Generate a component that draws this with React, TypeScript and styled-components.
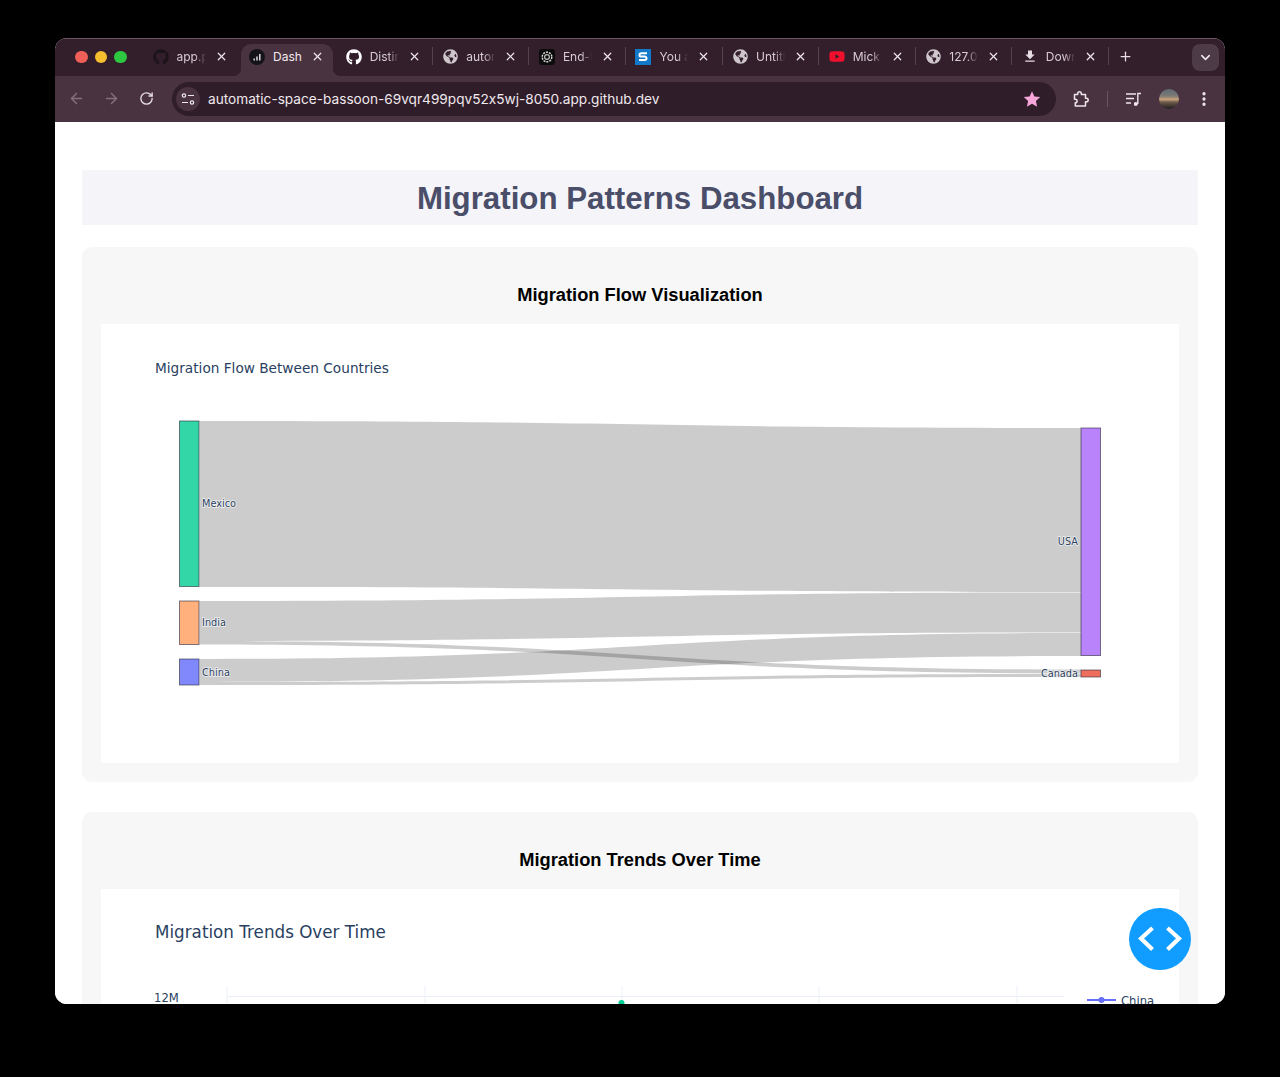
import React from 'react';
import styled, { createGlobalStyle } from 'styled-components';
import { ArrowLeft, ArrowRight, RotateCw, X, Plus, ChevronDown, EllipsisVertical } from 'lucide-react';
import { FaGithub, FaGlobeAmericas, FaYoutube } from 'react-icons/fa';
import { MdFileDownload } from 'react-icons/md';

const Global = createGlobalStyle`
  html, body { margin: 0; padding: 0; background: #000; height: 1077px; overflow: hidden; }
  * { box-sizing: border-box; }
`;

const STRIP = '#331f2c';
const BAR = '#4a3340';
const FIELD = '#2f1d29';

const BrowserWindow = styled.div`
  position: relative;
  width: 1170px;
  height: 966px;
  margin: 38px 0 0 55px;
  border-radius: 12px;
  overflow: hidden;
  display: flex;
  flex-direction: column;
  background: #fff;
`;
const TabStrip = styled.div`
  height: 38px;
  flex: none;
  display: flex;
  align-items: stretch;
  padding-top: 5px;
  background: ${STRIP};
  border-top: 1px solid #6b5560;
`;
const Lights = styled.div`
  width: 88px;
  flex: none;
  display: flex;
  align-items: flex-start;
  gap: 7px;
  padding: 6.5px 0 0 20px;
`;
const Light = styled.span<{ $c: string }>`
  width: 12.5px;
  height: 12.5px;
  border-radius: 50%;
  background: ${p => p.$c};
`;
const Tab = styled.div<{ $active?: boolean }>`
  position: relative;
  isolation: isolate;
  width: 95.6px;
  flex: none;
  display: flex;
  align-items: center;
  padding: 0 9px 7px 9.5px;
  color: #d8ccd3;
  font: 12px "Inter", "Liberation Sans", sans-serif;
  ${p => p.$active && `
    color: #f1eaee;
    &::before {
      content: '';
      position: absolute;
      inset: 0 2px 0 1.5px;
      background: ${BAR};
      border-radius: 10px 10px 0 0;
      z-index: -1;
    }
    &::after {
      content: '';
      position: absolute;
      left: -6.5px;
      right: -6px;
      bottom: 0;
      height: 8px;
      z-index: -1;
      background:
        radial-gradient(circle at 0 0, transparent 8px, ${BAR} 8.5px) left top / 8px 8px no-repeat,
        radial-gradient(circle at 100% 0, transparent 8px, ${BAR} 8.5px) right top / 8px 8px no-repeat;
    }
  `}
`;
const Favicon = styled.span`
  width: 16px;
  height: 16px;
  flex: none;
  display: flex;
  align-items: center;
  justify-content: center;
`;
const TabTitle = styled.span<{ $fade?: boolean }>`
  width: 29px;
  margin-left: 8px;
  flex: none;
  overflow: hidden;
  white-space: nowrap;
  ${p => p.$fade && `
    -webkit-mask-image: linear-gradient(90deg, #000 62%, transparent 100%);
    mask-image: linear-gradient(90deg, #000 62%, transparent 100%);
  `}
`;
const TabClose = styled.span`
  margin-left: 8.5px;
  width: 14px;
  height: 14px;
  flex: none;
  display: flex;
  align-items: center;
  justify-content: center;
  color: #eee6ea;
`;
const Divider = styled.span<{ $off?: boolean }>`
  width: 1px;
  height: 18px;
  margin-top: 3px;
  flex: none;
  background: ${p => (p.$off ? 'transparent' : '#56414d')};
`;
const NewTab = styled.span`
  width: 33px;
  flex: none;
  display: flex;
  align-items: center;
  justify-content: center;
  padding-bottom: 7px;
  color: #e6dde2;
`;
const TabMenu = styled.span`
  margin-left: auto;
  margin-right: 6px;
  width: 27px;
  height: 27px;
  border-radius: 8px;
  background: #4d3b47;
  color: #efe8ec;
  display: flex;
  align-items: center;
  justify-content: center;
`;
const Toolbar = styled.div`
  height: 46px;
  flex: none;
  display: flex;
  align-items: center;
  background: ${BAR};
  padding: 0 0 1px 12px;
`;
const NavButton = styled.span<{ $dim?: boolean }>`
  width: 18px;
  height: 18px;
  margin-right: 17px;
  display: flex;
  align-items: center;
  justify-content: center;
  color: ${p => (p.$dim ? '#84707c' : '#e6dde2')};
`;
const Omnibox = styled.div`
  width: 884px;
  height: 34px;
  border-radius: 17px;
  background: ${FIELD};
  display: flex;
  align-items: center;
  padding: 0 15px 0 4px;
  color: #f0e9ed;
  font: 13.65px "Inter", "Liberation Sans", sans-serif;
  font-feature-settings: "calt" 0;
`;
const SiteChip = styled.span`
  width: 24px;
  height: 24px;
  margin-right: 8px;
  border-radius: 50%;
  background: ${BAR};
  display: flex;
  align-items: center;
  justify-content: center;
`;
const Url = styled.span`
  flex: 1;
  white-space: nowrap;
`;
const Tools = styled.div`
  display: flex;
  align-items: center;
  margin-left: 15px;
  color: #eee6ea;
`;
const ToolIcon = styled.span`
  width: 20px;
  height: 20px;
  display: flex;
  align-items: center;
  justify-content: center;
`;
const ToolSep = styled.span`
  width: 1px;
  height: 16px;
  margin: 0 16px;
  background: #6a5460;
`;
const Avatar = styled.span`
  width: 20px;
  height: 20px;
  margin: 0 15px 0 15px;
  border-radius: 50%;
  background: linear-gradient(180deg, #5d6a72 0%, #7c7a75 35%, #c9a27a 52%, #6b5a4a 66%, #1f1c1c 100%);
`;
const Content = styled.main`
  flex: 1;
  min-height: 0;
  overflow: hidden;
  padding: 48px 27px 0;
  background: #fff;
`;
const Header = styled.h1`
  margin: 0 0 22px;
  height: 55px;
  background: #f4f4f9;
  color: #4a4e69;
  font: bold 31.25px/57px "Liberation Sans", Arial, sans-serif;
  text-align: center;
`;
const Card = styled.section`
  background: #f7f7f7;
  border-radius: 10px;
  padding: 0 19px 19px;
  margin-bottom: 30px;
`;
const CardTitle = styled.h2`
  margin: 0;
  height: 77px;
  padding-top: 35px;
  color: #000;
  font: bold 18.3px/25px "Liberation Sans", Arial, sans-serif;
  text-align: center;
`;
const Plot = styled.div<{ $h: number }>`
  height: ${p => p.$h}px;
  background: #fff;
  overflow: hidden;
`;
const ChartSvg = styled.svg`
  display: block;
  width: 1078px;
`;
const PlotTitle = styled.text<{ $size: number }>`
  font-family: "DejaVu Sans", Verdana, sans-serif;
  font-size: ${p => p.$size}px;
  fill: #2a3f5f;
`;
const NodeLabel = styled.text`
  font-family: "DejaVu Sans", Verdana, sans-serif;
  font-size: 9.75px;
  fill: #2a3f5f;
  paint-order: stroke;
  stroke: rgba(255, 255, 255, 0.75);
  stroke-width: 1.5px;
`;
const AxisLabel = styled.text`
  font-family: "DejaVu Sans", Verdana, sans-serif;
  font-size: 11.6px;
  fill: #2a3f5f;
`;
const Fab = styled.button`
  position: absolute;
  left: 1074px;
  top: 870px;
  width: 62px;
  height: 62px;
  padding: 0;
  border: 0;
  border-radius: 50%;
  background: #119dff;
  display: flex;
  align-items: center;
  justify-content: center;
`;

const link = (x0: number, x1: number, a0: number, b0: number, a1: number, b1: number) => {
  const m = (x0 + x1) / 2;
  return `M${x0} ${a0}C${m} ${a0} ${m} ${a1} ${x1} ${a1}L${x1} ${b1}C${m} ${b1} ${m} ${b0} ${x0} ${b0}Z`;
};

const links = [
  [421, 587, 428, 592],
  [601, 641, 592.5, 632.5],
  [641, 644.5, 669.5, 673.5],
  [659, 682, 633, 656],
  [682, 685, 674, 677],
];
const nodes = [
  { x: 179.5, y: 421, h: 165.5, c: '#33d6a6' },
  { x: 179.5, y: 601, h: 43.5, c: '#ffb07c' },
  { x: 179.5, y: 659, h: 26, c: '#8088fb' },
  { x: 1081, y: 428, h: 227.5, c: '#b983fc' },
  { x: 1081, y: 670, h: 7, c: '#ef6f5e' },
];

const Sankey = () => (
  <ChartSvg viewBox="101 324 1078 439" height={439}>
    <PlotTitle $size={13.67} x={155} y={372.5}>Migration Flow Between Countries</PlotTitle>
    {links.map((l, i) => (
      <path key={i} d={link(199.5, 1081, l[0], l[1], l[2], l[3])} fill="rgba(0,0,0,0.2)" />
    ))}
    {nodes.map((n, i) => (
      <rect key={i} x={n.x} y={n.y} width={19.5} height={n.h} fill={n.c} stroke="rgba(40,40,60,0.6)" strokeWidth={1} />
    ))}
    <NodeLabel x={202} y={507}>Mexico</NodeLabel>
    <NodeLabel x={202} y={626}>India</NodeLabel>
    <NodeLabel x={202} y={676}>China</NodeLabel>
    <NodeLabel x={1078} y={545} textAnchor="end">USA</NodeLabel>
    <NodeLabel x={1078} y={677} textAnchor="end">Canada</NodeLabel>
  </ChartSvg>
);

const Trends = () => (
  <ChartSvg viewBox="101 889 1078 115" height={115}>
    <PlotTitle $size={16.75} x={155} y={937.5}>Migration Trends Over Time</PlotTitle>
    {[227, 425, 622, 819, 1017].map(x => (
      <line key={x} x1={x} x2={x} y1={986} y2={1004} stroke="#ebf0f8" />
    ))}
    <line x1={227} x2={1064} y1={996.5} y2={996.5} stroke="#ebf0f8" />
    <AxisLabel x={154} y={1001.5}>12M</AxisLabel>
    <circle cx={621.5} cy={1003} r={3} fill="#00cc96" />
    <line x1={1087} x2={1116} y1={1000} y2={1000} stroke="#636efa" strokeWidth={2} />
    <circle cx={1101.5} cy={1000} r={3} fill="#636efa" />
    <AxisLabel x={1121} y={1005}>China</AxisLabel>
  </ChartSvg>
);

const DashIcon = () => (
  <svg width="16" height="16" viewBox="0 0 16 16">
    <circle cx="8" cy="8" r="8" fill="#15131a" />
    <path d="M4.5 9.5h1.4v2H4.5zM7.3 7.5h1.4v4H7.3zM10.1 5h1.4v6.5h-1.4z" fill="#e8e8e8" />
  </svg>
);
const GptIcon = () => (
  <svg width="16" height="16" viewBox="0 0 16 16">
    <rect width="16" height="16" rx="3" fill="#0c0c0c" />
    <circle cx="8" cy="8" r="4.8" fill="none" stroke="#d8d8d8" strokeWidth="1.4" strokeDasharray="2 1" />
    <circle cx="8" cy="8" r="2.4" fill="none" stroke="#bdbdbd" strokeWidth="1.2" />
  </svg>
);
const StackIcon = () => (
  <svg width="16" height="16" viewBox="0 0 16 16">
    <rect width="16" height="16" fill="#1478c8" />
    <path d="M12 4.2H6.2a1.5 1.5 0 0 0 0 3.4h3.6a1.5 1.5 0 0 1 0 3.4H4" fill="none" stroke="#fff" strokeWidth="2" />
  </svg>
);
const SiteIcon = () => (
  <svg width="14" height="14" viewBox="0 0 14 14" fill="none" stroke="#efe8ec" strokeWidth="1.2">
    <circle cx="3" cy="3.5" r="1.7" />
    <path d="M7 3.5h6M1 10.5h6" />
    <circle cx="11" cy="10.5" r="1.7" />
  </svg>
);
const ExtensionIcon = () => (
  <svg width="18" height="18" viewBox="0 0 18 18" fill="none" stroke="currentColor" strokeWidth="1.5" strokeLinejoin="round">
    <path d="M2.5 4.5h3.2V3.6a1.8 1.8 0 0 1 3.6 0v.9h4.2v3.7h.9a1.8 1.8 0 0 1 0 3.6h-.9v4.2H3.3v-3.2c1 0 1.8-.8 1.8-1.8s-.8-1.8-1.8-1.8h-.8z" />
  </svg>
);
const StarIcon = () => (
  <svg width="18" height="18" viewBox="0 0 18 18">
    <path d="M9 1.2l2.4 5.3 5.8.6-4.3 3.9 1.2 5.7L9 13.8l-5.1 2.9 1.2-5.7L.8 7.1l5.8-.6z" fill="#f7a6da" />
  </svg>
);
const MediaIcon = () => (
  <svg width="16" height="16" viewBox="0 0 16 16" fill="none" stroke="currentColor" strokeWidth="1.4">
    <path d="M0 3h10M0 7.5h8M0 12h5M11.8 13V2.5H15" />
    <circle cx="9.8" cy="13" r="2" fill="currentColor" stroke="none" />
  </svg>
);

type TabDef = { icon: React.ReactNode; title: string; active?: boolean; fade?: boolean; noDivider?: boolean };
const globe = <FaGlobeAmericas size={15} color="#cfc6cb" />;
const tabs: TabDef[] = [
  { icon: <FaGithub size={16} color="#1d1419" />, title: 'app.py', fade: true, noDivider: true },
  { icon: <DashIcon />, title: 'Dash', active: true, noDivider: true },
  { icon: <FaGithub size={16} color="#fff" />, title: 'Distinct', fade: true },
  { icon: globe, title: 'automatic', fade: true },
  { icon: <GptIcon />, title: 'End-to', fade: true },
  { icon: <StackIcon />, title: 'You are', fade: true },
  { icon: globe, title: 'Untitled', fade: true },
  { icon: <FaYoutube size={17} color="#f0102e" />, title: 'Mick', fade: true },
  { icon: globe, title: '127.0.0.1', fade: true },
  { icon: <MdFileDownload size={17} color="#e6dde2" />, title: 'Downloads', fade: true },
];

export default function App() {
  return (
    <>
      <Global />
      <BrowserWindow>
        <TabStrip>
          <Lights>
            <Light $c="#ee5f57" />
            <Light $c="#f6bd2f" />
            <Light $c="#2dc840" />
          </Lights>
          {tabs.map(t => (
            <React.Fragment key={t.title}>
              <Tab $active={t.active}>
                <Favicon>{t.icon}</Favicon>
                <TabTitle $fade={t.fade}>{t.title}</TabTitle>
                <TabClose><X size={13} strokeWidth={2.2} /></TabClose>
              </Tab>
              <Divider $off={t.noDivider} />
            </React.Fragment>
          ))}
          <NewTab><Plus size={15} strokeWidth={2} /></NewTab>
          <TabMenu><ChevronDown size={15} strokeWidth={2.5} /></TabMenu>
        </TabStrip>
        <Toolbar>
          <NavButton $dim><ArrowLeft size={17} /></NavButton>
          <NavButton $dim><ArrowRight size={17} /></NavButton>
          <NavButton><RotateCw size={15} strokeWidth={2.2} /></NavButton>
          <Omnibox>
            <SiteChip><SiteIcon /></SiteChip>
            <Url>automatic-space-bassoon-69vqr499pqv52x5wj-8050.app.github.dev</Url>
            <StarIcon />
          </Omnibox>
          <Tools>
            <ToolIcon><ExtensionIcon /></ToolIcon>
            <ToolSep />
            <ToolIcon><MediaIcon /></ToolIcon>
            <Avatar />
            <ToolIcon><EllipsisVertical size={18} strokeWidth={2.4} /></ToolIcon>
          </Tools>
        </Toolbar>
        <Content>
          <Header>Migration Patterns Dashboard</Header>
          <Card>
            <CardTitle>Migration Flow Visualization</CardTitle>
            <Plot $h={439}><Sankey /></Plot>
          </Card>
          <Card>
            <CardTitle>Migration Trends Over Time</CardTitle>
            <Plot $h={450}><Trends /></Plot>
          </Card>
        </Content>
        <Fab aria-label="Toggle code view">
          <svg width="44" height="30" viewBox="0 0 44 30" fill="none" stroke="#fff" strokeWidth="4.2">
            <path d="M14.5 4 3 14.5 14.5 25.5M29.5 4 41 14.5 29.5 25.5" />
          </svg>
        </Fab>
      </BrowserWindow>
    </>
  );
}
